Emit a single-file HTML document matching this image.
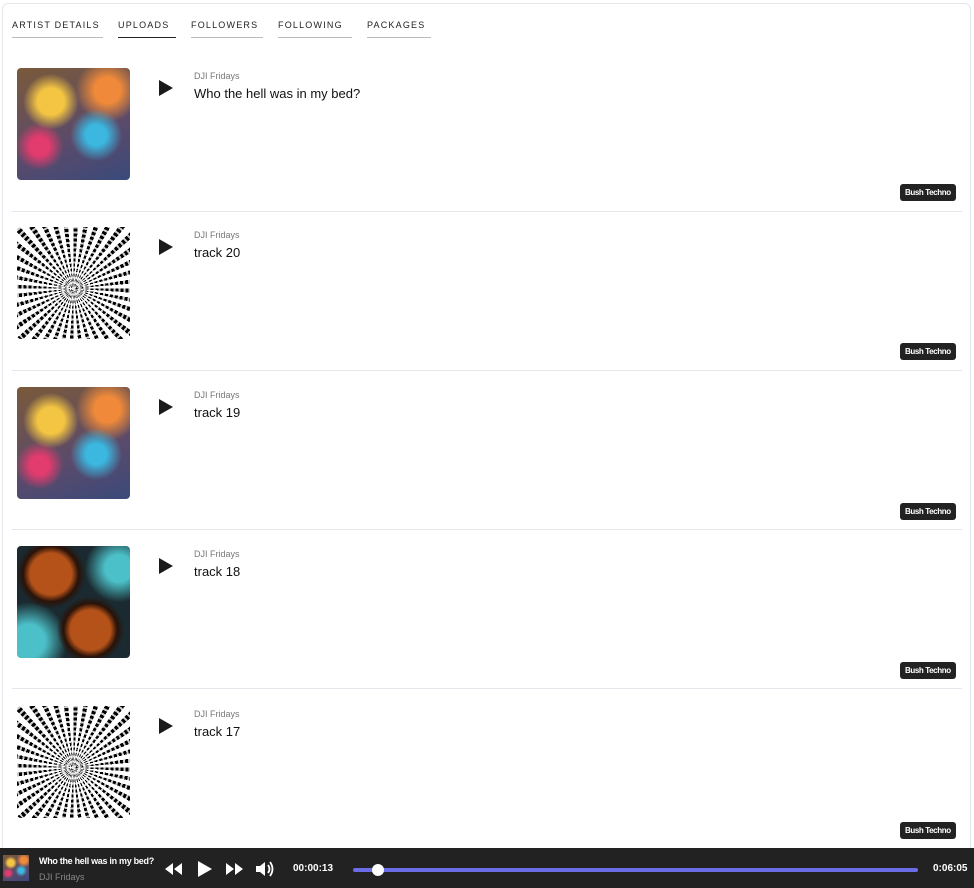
<!DOCTYPE html>
<html><head><meta charset="utf-8"><style>
*{margin:0;padding:0;box-sizing:border-box}
body{width:974px;height:888px;overflow:hidden;background:#fff;font-family:"Liberation Sans",sans-serif;position:relative}
.card{position:absolute;left:2px;top:3px;width:969px;height:860px;border:1px solid #e3e6ea;border-radius:6px}
.tab{position:absolute;top:20px;font-size:9px;letter-spacing:1.2px;color:#222;padding-bottom:7px;border-bottom:1px solid #bbb;white-space:nowrap}
.tab.on{border-bottom:1px solid #222}
.row{position:absolute;left:12px;width:950px;height:160px}
.row .sep{position:absolute;left:0;right:0;bottom:0;height:1px;background:#e3e6ea}
.art{position:absolute;left:5px;top:0;width:113px;height:112px;border-radius:4px;overflow:hidden}
.tree{background:radial-gradient(circle at 30% 30%,#f4c542 0 12%,transparent 25%),radial-gradient(circle at 70% 60%,#3bb7e0 0 10%,transparent 25%),radial-gradient(circle at 20% 70%,#e23b6d 0 8%,transparent 20%),radial-gradient(circle at 80% 20%,#f08a3a 0 10%,transparent 25%),linear-gradient(160deg,#7a5a3a,#5b4a6a 60%,#3a4a7a)}
.bw{background:repeating-radial-gradient(circle at 50% 55%,rgba(255,255,255,.8) 0 2px,transparent 2px 5px),repeating-conic-gradient(from 0deg at 50% 55%,#000 0 4deg,#fff 4deg 9deg),#fff}
.orb{background:radial-gradient(circle at 30% 25%,#b4521a 0 18%,#2a1208 24%,transparent 30%),radial-gradient(circle at 65% 75%,#b4521a 0 18%,#2a1208 24%,transparent 30%),radial-gradient(circle at 90% 20%,#4cc0c8 0 10%,transparent 25%),radial-gradient(circle at 10% 85%,#4cc0c8 0 12%,transparent 28%),#1a2a30}
.play{position:absolute;left:147px;top:12px;width:0;height:0;border-left:14px solid #1a1a1a;border-top:8px solid transparent;border-bottom:8px solid transparent}
.artist{position:absolute;left:182px;top:3px;font-size:9px;color:#777}
.title{position:absolute;left:182px;top:18px;font-size:13px;color:#111}
.badge{position:absolute;left:888px;top:116px;background:#222;color:#fff;font-size:8px;font-weight:bold;padding:4px 5px;border-radius:3px;letter-spacing:-0.4px}
.bar{position:absolute;left:0;top:848px;width:974px;height:40px;background:#222}
</style></head><body>
<div class="card"></div>
<div class="tab" style="left:12px;width:91px">ARTIST DETAILS</div>
<div class="tab on" style="left:118px;width:58px">UPLOADS</div>
<div class="tab" style="left:191px;width:72px">FOLLOWERS</div>
<div class="tab" style="left:278px;width:74px">FOLLOWING</div>
<div class="tab" style="left:367px;width:64px">PACKAGES</div>

<div class="row" style="top:68px"><div class="art tree"></div><div class="play"></div><div class="artist">DJI Fridays</div><div class="title">Who the hell was in my bed?</div><div class="badge">Bush Techno</div><div class="sep" style="bottom:16px"></div></div>
<div class="row" style="top:227px"><div class="art bw"></div><div class="play"></div><div class="artist">DJI Fridays</div><div class="title">track 20</div><div class="badge">Bush Techno</div><div class="sep" style="bottom:16px"></div></div>
<div class="row" style="top:387px"><div class="art tree"></div><div class="play"></div><div class="artist">DJI Fridays</div><div class="title">track 19</div><div class="badge">Bush Techno</div><div class="sep" style="bottom:17px"></div></div>
<div class="row" style="top:546px"><div class="art orb"></div><div class="play"></div><div class="artist">DJI Fridays</div><div class="title">track 18</div><div class="badge">Bush Techno</div><div class="sep" style="bottom:17px"></div></div>
<div class="row" style="top:706px"><div class="art bw"></div><div class="play"></div><div class="artist">DJI Fridays</div><div class="title">track 17</div><div class="badge">Bush Techno</div></div>

<div class="bar">
<div class="tree" style="position:absolute;left:3px;top:7px;width:26px;height:26px"></div>
<div style="position:absolute;left:39px;top:8px;color:#fff;font-size:9px;font-weight:bold;letter-spacing:-0.3px">Who the hell was in my bed?</div>
<div style="position:absolute;left:39px;top:24px;color:#888;font-size:9px">DJI Fridays</div>
<svg style="position:absolute;left:164px;top:12px" width="120" height="18" viewBox="0 0 120 18">
<path d="M9 3L1 9L9 15ZM18 3L10 9L18 15Z" fill="#fff"/>
<path d="M34 1L48 9L34 17Z" fill="#fff"/>
<path d="M62 3L70 9L62 15ZM71 3L79 9L71 15Z" fill="#fff"/>
<path d="M92 6H96L101 2V16L96 12H92Z" fill="#fff"/>
<path d="M104 5Q107 9 104 13M106 2Q111 9 106 16" stroke="#fff" stroke-width="1.8" fill="none"/>
</svg>
<div style="position:absolute;left:293px;top:15px;color:#fff;font-size:10px;font-weight:bold">00:00:13</div>
<div style="position:absolute;left:353px;top:20px;width:565px;height:4px;background:#6b6ce8;border-radius:2px"></div>
<div style="position:absolute;left:372px;top:16px;width:12px;height:12px;background:#fff;border-radius:50%"></div>
<div style="position:absolute;left:933px;top:15px;color:#fff;font-size:10px;font-weight:bold">0:06:05</div>
</div>
</body></html>
